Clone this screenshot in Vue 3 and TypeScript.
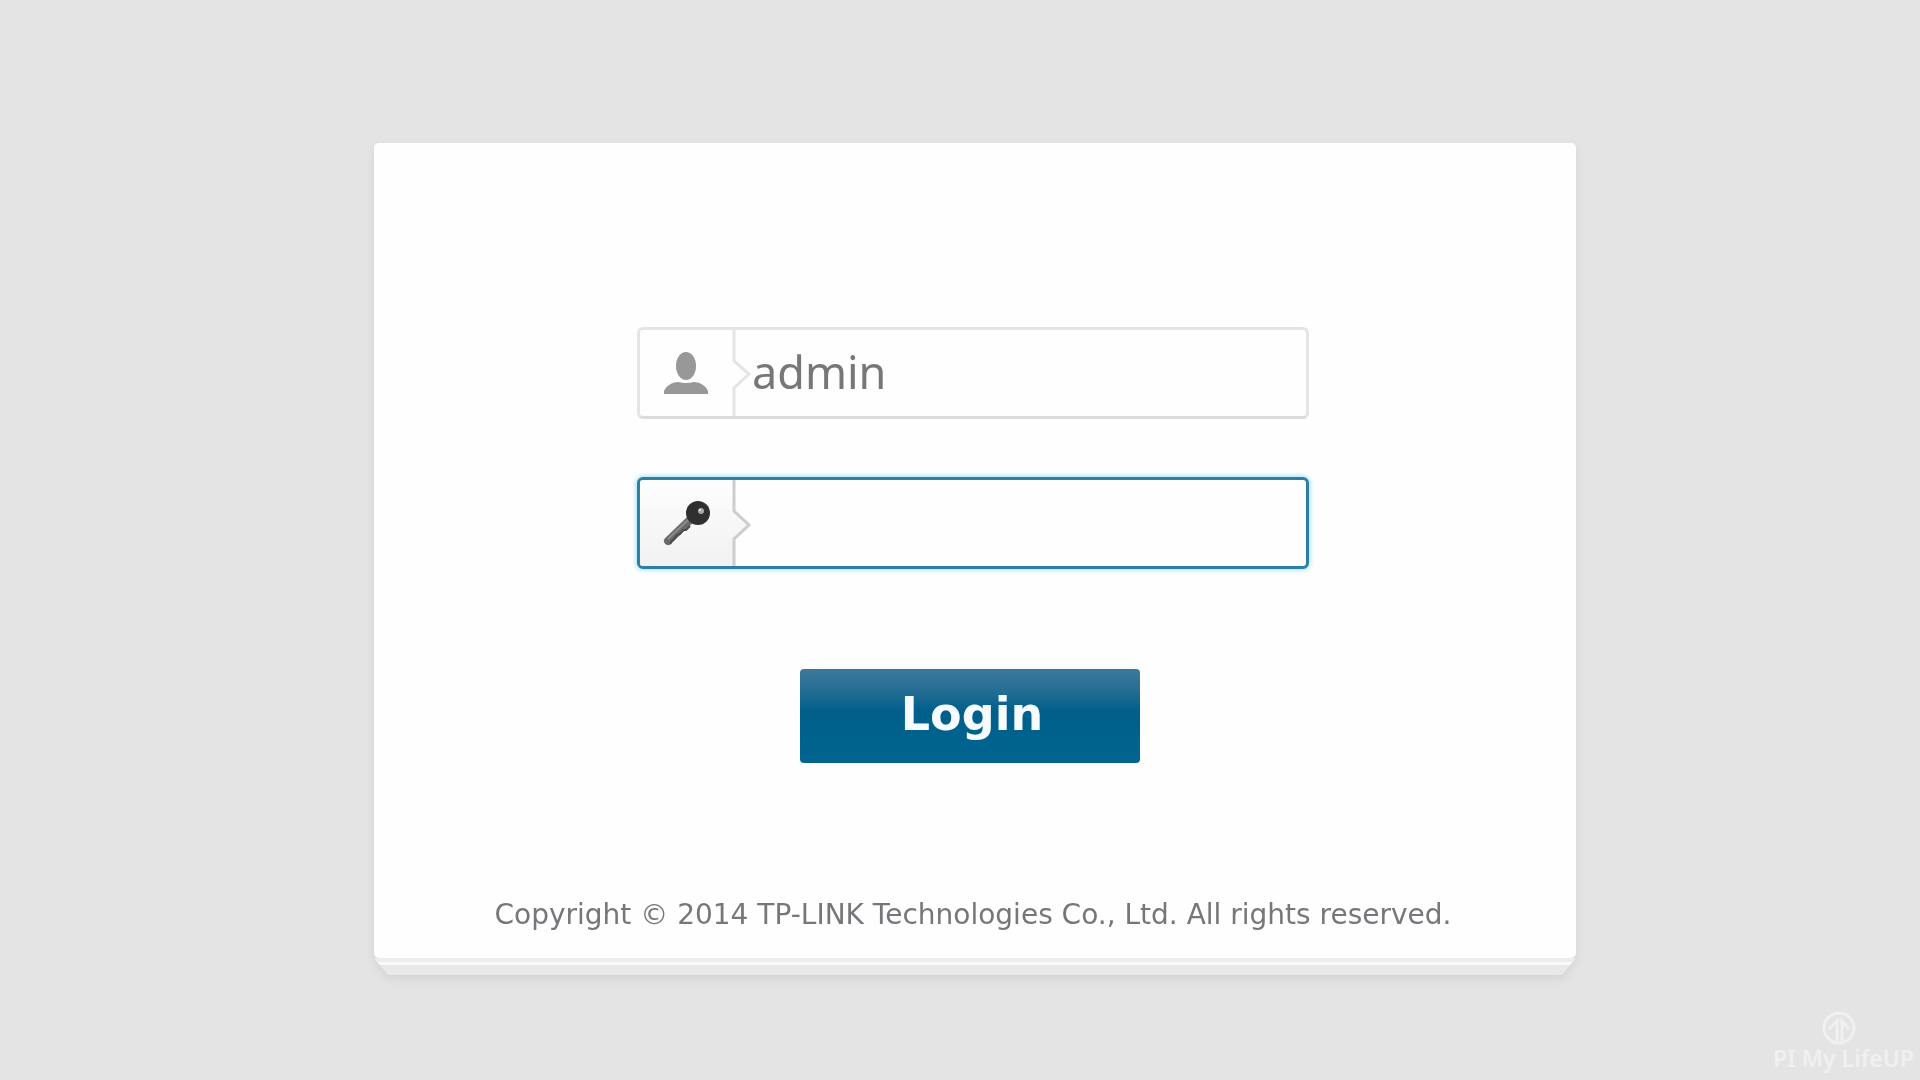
<script setup lang="ts">
import { ref } from 'vue'

const username = ref('admin')
const password = ref('')
</script>

<template>
  <div class="page">
    <main class="panel">
      <div class="card">
        <form class="login" @submit.prevent>
          <div class="field">
            <label for="username" aria-label="Username">
              <svg class="addon" viewBox="0 0 112 86" aria-hidden="true">
                <path class="divider" d="M94 0V31L109 44L94 58V86" />
                <ellipse cx="46" cy="36" rx="10" ry="14" fill="#989898" />
                <path d="M24 64V61C26 56 32 52 38 52Q46 54 54 52C60 52 66 56 68 61V64Z" fill="#989898" />
              </svg>
            </label>
            <input id="username" v-model="username" type="text" autocomplete="off" />
          </div>
          <div class="field active">
            <label for="password" aria-label="Password">
              <svg class="addon" viewBox="0 0 112 86" aria-hidden="true">
                <defs>
                  <linearGradient id="tab" x1="0" y1="0" x2="0" y2="1">
                    <stop offset="0" stop-color="#fefefe" />
                    <stop offset="1" stop-color="#f1f1f2" />
                  </linearGradient>
                </defs>
                <path d="M0 0H94V31L109 45L94 59V86H0Z" fill="url(#tab)" />
                <path class="divider" d="M94 0V31L109 45L94 59V86" />
                <path d="M52 38L28 61" stroke="#6a6a6a" stroke-width="8" stroke-linecap="round" />
                <path d="M50 46L46 50L43 50L40 54L37 55L34 59L32 61L30 64" stroke="#4c4c4c" stroke-width="2" fill="none" />
                <path d="M49 39L28 59" stroke="#8b8b8b" stroke-width="2" />
                <circle cx="58" cy="33" r="12" fill="#303030" />
                <circle cx="61" cy="31" r="3" fill="#a8a8a8" />
                <circle cx="60" cy="30" r="1" fill="#eeeeee" />
              </svg>
            </label>
            <input id="password" v-model="password" type="password" autocomplete="off" />
          </div>
          <div class="actions">
            <button type="submit">Login</button>
          </div>
        </form>
        <p class="copyright">Copyright © 2014 TP-LINK Technologies Co., Ltd. All rights reserved.</p>
      </div>
      <div class="sheets"></div>
    </main>

    <footer class="brand">
      <svg width="34" height="34" viewBox="0 0 34 34" fill="none" aria-hidden="true">
        <circle cx="17" cy="17" r="15" stroke="#f0f0f0" stroke-width="3" />
        <path d="M15 31V10L7 18M20 31V10L27 18" stroke="#f0f0f0" stroke-width="3" />
      </svg>
      <span>PI My LifeUP</span>
    </footer>
  </div>
</template>

<style>
body {
  margin: 0;
  background: #e4e4e4;
}
</style>

<style scoped>
.page {
  box-sizing: border-box;
  display: flex;
  flex-direction: column;
  min-height: 100vh;
  padding-top: 143px;
  font-family: "Noto Sans", "DejaVu Sans", sans-serif;
}

.panel {
  width: 100%;
  max-width: 1202px;
  margin: 0 auto;
  padding-left: 30px;
  filter: drop-shadow(0 4px 4px rgba(0, 0, 0, 0.07));
}

.card {
  box-sizing: border-box;
  display: flex;
  flex-direction: column;
  align-items: center;
  padding: 184px 4px 23px 0;
  border-radius: 5px;
  background: #fefefe;
}

.login {
  display: flex;
  flex-direction: column;
  gap: 58px;
  width: 100%;
  max-width: 672px;
}

.field {
  display: flex;
  height: 86px;
  border: 3px solid #e5e5e7;
  border-bottom-color: #dcdcde;
  border-radius: 6px;
  background: #fefefe;
  overflow: hidden;
}

.field.active {
  border-color: #2c80a5;
  box-shadow: 0 0 5px 1px #a5dcf3;
}

.addon {
  display: block;
  width: 112px;
  height: 86px;
}

.divider {
  fill: none;
  stroke: #e5e5e7;
  stroke-width: 3;
}

.active .divider {
  stroke: #cdcdd0;
}

input {
  flex: 1;
  min-width: 0;
  padding: 0 0 4px;
  border: 0;
  outline: 0;
  background: transparent;
  color: #777777;
  font: 45px "Noto Sans", "DejaVu Sans", sans-serif;
}

.actions {
  display: flex;
  justify-content: center;
  padding: 42px 6px 0 0;
}

button {
  width: 340px;
  height: 94px;
  padding: 0 0 4px 4px;
  border: 0;
  border-radius: 4px;
  background: linear-gradient(#3b799b, #2c7095 18%, #005f8b 45%, #00658f);
  color: #f5fbff;
  font: bold 46px "DejaVu Sans", sans-serif;
}

.copyright {
  margin: 132px 0 0;
  color: #77777b;
  font-family: "DejaVu Sans", sans-serif;
  font-size: 28px;
  line-height: 40px;
  white-space: nowrap;
}

.sheets {
  height: 17px;
  background: linear-gradient(#ededed 4px, #f9f9f9 4px, #f9f9f9 7px, #e8e8e8 7px);
  clip-path: polygon(0 0, 100% 0, calc(100% - 14px) 100%, 14px 100%);
}

.brand {
  display: flex;
  flex-direction: column;
  align-items: center;
  align-self: flex-end;
  margin-top: auto;
  padding: 0 6px 9px 0;
  color: #f0f0f0;
  font-size: 23px;
  font-weight: 600;
  line-height: 26px;
}

.brand svg {
  margin-right: 10px;
}
</style>
